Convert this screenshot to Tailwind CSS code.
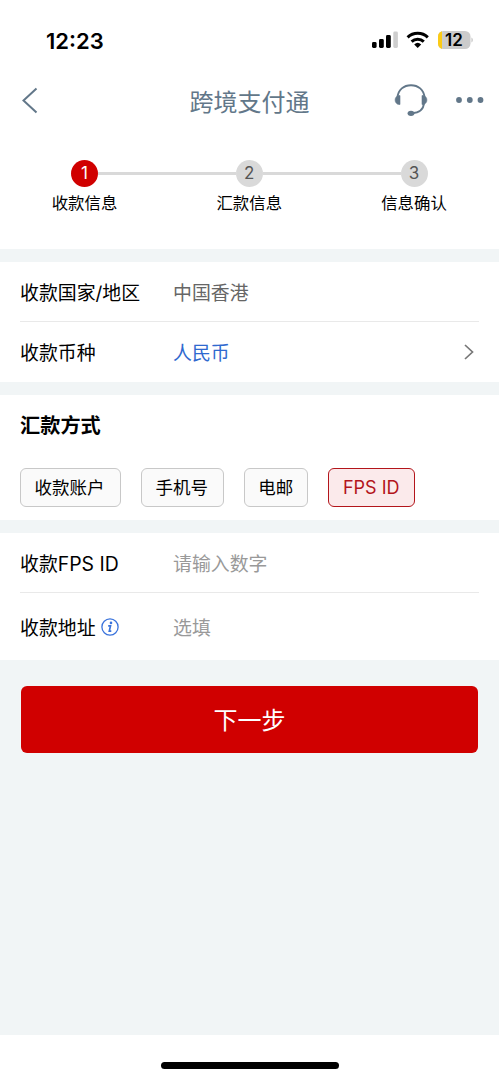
<!DOCTYPE html>
<html lang="zh-CN">
<head>
<meta charset="utf-8">
<meta name="viewport" content="width=device-width, initial-scale=1">
<title>跨境支付通</title>
<script src="https://cdn.jsdelivr.net/npm/@tailwindcss/browser@4"></script>
</head>
<body class="bg-[#f1f5f6] text-black font-['Inter','Noto_Sans_CJK_SC',sans-serif]">
<div class="flex h-[1080px] w-[499px] flex-col overflow-hidden">
  <header class="bg-white">
    <div class="flex h-[79px] items-center justify-between pl-[46px] pr-[26px]">
      <span class="pt-[2px] text-[22px] font-semibold leading-none">12:23</span>
      <svg class="block" width="102" height="20" viewBox="0 0 102 20">
        <g fill="#000"><rect x="1" y="12" width="4.600" height="6" rx="1.400"/><rect x="8" y="9" width="4.800" height="9" rx="1.400"/><rect x="15" y="5" width="4.800" height="13" rx="1.400"/></g>
        <rect x="22.300" y="1.600" width="4.600" height="16.400" rx="1.400" fill="#cecece"/>
        <g fill="none" stroke="#000" stroke-width="3"><path d="M36.600 7.400a14.600 14.600 0 0 1 20.200 0"/><path d="M40.600 11.600a9 9 0 0 1 12.200 0"/></g>
        <path d="M43.200 14.400a5.200 5.200 0 0 1 7 0L46.700 18z"/>
        <clipPath id="cell"><rect x="67" y="1" width="32.500" height="18" rx="5.500"/></clipPath>
        <g clip-path="url(#cell)"><rect x="67" y="1" width="34" height="18" fill="#cbcbcb"/><rect x="67" y="1" width="4" height="18" fill="#fccb16"/></g>
        <path d="M100.400 7.500c2 .8 2 4.200 0 5z" fill="#cbcbcb"/>
        <text x="83" y="16" text-anchor="middle" font-family="Inter" font-size="17" font-weight="600">12</text>
      </svg>
    </div>
    <div class="grid h-[44px] grid-cols-[1fr_auto_1fr] items-center">
      <svg class="ml-[21px] block" width="18" height="28" viewBox="0 0 18 28" fill="none" stroke="#627789" stroke-width="2"><path d="M15.500 1.500 2.500 13.500l13 12"/></svg>
      <h1 class="pt-[4px] text-[24px] leading-none text-[#627789]">跨境支付通</h1>
      <div class="flex items-center justify-end gap-[27px] pr-[15px] pb-[2px]">
        <svg class="block" width="34" height="34" viewBox="0 0 34 34" fill="none" stroke="#627789">
          <path d="M3.500 14.500C4 6.500 10 2.200 17 2.200S30 6.500 30.500 14.500M30 20c-.5 6.500-5 9.800-12 10.200" stroke-width="1.900"/>
          <path d="M6 12.500v9C-.5 22-.5 12 6 12.500zM28 12.500v9c6.500.5 6.500-9.500 0-9z" fill="#627789" stroke="#627789" stroke-width=".6"/>
          <ellipse cx="17" cy="30.300" rx="3.400" ry="2.600" fill="#627789" stroke="none"/>
        </svg>
        <svg class="block" width="29" height="8" viewBox="0 0 29 8" fill="#627789"><circle cx="4" cy="4" r="2.900"/><circle cx="14.800" cy="4" r="2.900"/><circle cx="25.500" cy="4" r="2.900"/></svg>
      </div>
    </div>
    <ol class="flex h-[126px] justify-between pl-[51px] pr-[51.5px] pt-[37px] leading-none">
      <li class="flex w-[67px] flex-col items-center">
        <span class="flex size-[27px] items-center justify-center rounded-full bg-[#d00000] text-[17px] text-white">1</span>
        <span class="mt-[8px] whitespace-nowrap text-[16.4px]">收款信息</span>
      </li>
      <li class="mt-[12px] -mx-[20px] h-[3px] flex-1 bg-[#d9d9d9]" aria-hidden="true"></li>
      <li class="flex w-[67px] flex-col items-center">
        <span class="flex size-[27px] items-center justify-center rounded-full bg-[#d9d9d9] text-[17px] text-[#555]">2</span>
        <span class="mt-[8px] whitespace-nowrap text-[16.4px]">汇款信息</span>
      </li>
      <li class="mt-[12px] -mx-[20px] h-[3px] flex-1 bg-[#d9d9d9]" aria-hidden="true"></li>
      <li class="flex w-[67px] flex-col items-center">
        <span class="flex size-[27px] items-center justify-center rounded-full bg-[#d9d9d9] text-[17px] text-[#555]">3</span>
        <span class="mt-[8px] whitespace-nowrap text-[16.4px]">信息确认</span>
      </li>
    </ol>
  </header>

  <main class="flex flex-1 flex-col">
    <section class="mt-[13px] h-[120px] bg-white px-[20px] text-[18.9px] leading-none">
      <div class="flex h-[60px] items-center border-b border-[#e9e9e9] pt-[6px]">
        <span class="w-[153px]">收款国家/地区</span><span class="text-[#666]">中国香港</span>
      </div>
      <div class="flex h-[60px] items-center pt-[5px]">
        <span class="w-[153px]">收款币种</span><span class="text-[#2f69cf]">人民币</span>
        <svg class="ml-auto mr-[5px] mb-[5px] block" width="10" height="16" viewBox="0 0 10 16" fill="none" stroke="#777" stroke-width="1.700"><path d="M1 1l7.500 7L1 15"/></svg>
      </div>
    </section>

    <section class="mt-[13px] h-[125px] bg-white px-[20px] leading-none">
      <h2 class="pt-[21px] text-[20.2px] font-bold">汇款方式</h2>
      <div class="mt-[32px] flex gap-[20px] text-[17.500px]">
        <button class="h-[39px] w-[101px] rounded-[6px] border border-[#c8c8c8] bg-[#fafafa] pr-[2px]">收款账户</button>
        <button class="h-[39px] w-[82.500px] rounded-[6px] border border-[#c8c8c8] bg-[#fafafa] pr-[1px]">手机号</button>
        <button class="h-[39px] w-[64.500px] rounded-[6px] border border-[#c8c8c8] bg-[#fafafa]">电邮</button>
        <button class="h-[39px] w-[86.5px] rounded-[6px] border border-[#b3151b] bg-[#fbeaeb] text-[18px] text-[#b3151b]">FPS ID</button>
      </div>
    </section>

    <section class="mt-[13px] h-[127px] bg-white px-[20px] text-[18.9px] leading-none">
      <div class="flex h-[60px] items-center border-b border-[#e9e9e9] pt-[5px]">
        <span class="w-[153px]">收款<span class="text-[19.4px] leading-[0]">FPS ID</span></span><span class="text-[#999]">请输入数字</span>
      </div>
      <div class="flex h-[67px] items-center pt-[5px]">
        <span class="flex w-[153px] items-center gap-[5px]">收款地址
          <svg class="mb-[4px] block" width="18" height="18" viewBox="0 0 18 18" fill="none" stroke="#3a73dc"><circle cx="9" cy="9" r="8.100" stroke-width="1.300"/><circle cx="10" cy="4.900" r="1.300" fill="#3a73dc" stroke="none"/><path d="M7.200 7.900h2.300l-1.200 5.200h2" stroke-width="1.700"/></svg>
        </span><span class="text-[#999]">选填</span>
      </div>
    </section>

    <button class="mx-[21px] mt-[26px] h-[67px] rounded-[6px] bg-[#d00000] pt-[2px] text-[24px] leading-none text-white">下一步</button>
  </main>

  <footer class="flex h-[45px] justify-center bg-white pt-[27px]"><div class="h-[7px] w-[178px] rounded-full bg-black"></div></footer>
</div>
</body>
</html>
